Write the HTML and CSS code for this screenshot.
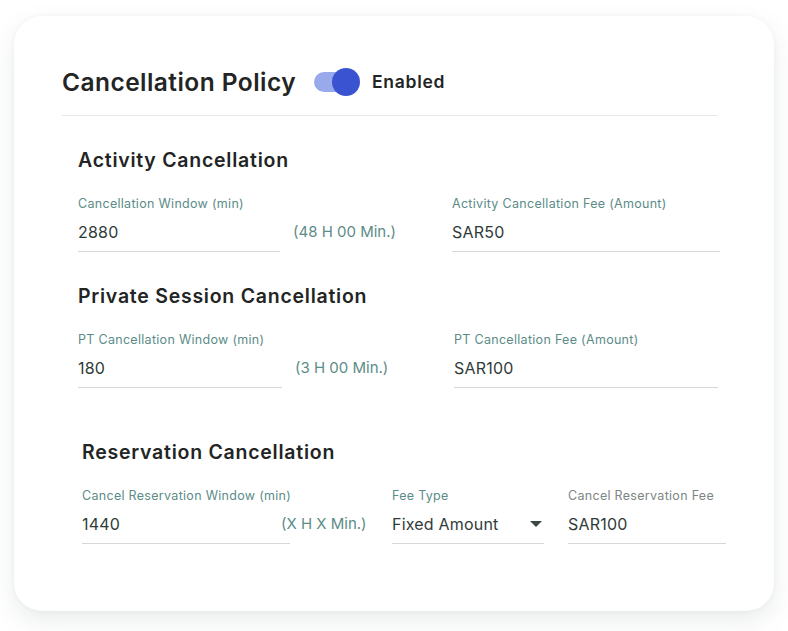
FILE: index.html
```html
<!DOCTYPE html>
<html lang="en">
<head>
<meta charset="utf-8">
<link rel="stylesheet" href="styles.css">
</head>
<body>
<div class="card">
  <div class="header">
    <h1 class="title">Cancellation Policy</h1>
    <div class="toggle"><div class="track"></div><div class="knob"></div></div>
    <span class="toggle-label">Enabled</span>
  </div>

  <section class="section s1">
    <h2 class="sec-title">Activity Cancellation</h2>
    <div class="row">
      <div class="field w1">
        <label class="lbl">Cancellation Window (min)</label>
        <div class="val">2880</div>
      </div>
      <div class="hint h1">(48 H 00 Min.)</div>
      <div class="field w2">
        <label class="lbl">Activity Cancellation Fee (Amount)</label>
        <div class="val">SAR50</div>
      </div>
    </div>
  </section>

  <section class="section s2">
    <h2 class="sec-title">Private Session Cancellation</h2>
    <div class="row">
      <div class="field w1b">
        <label class="lbl">PT Cancellation Window (min)</label>
        <div class="val">180</div>
      </div>
      <div class="hint h2">(3 H 00 Min.)</div>
      <div class="field w2b">
        <label class="lbl">PT Cancellation Fee (Amount)</label>
        <div class="val">SAR100</div>
      </div>
    </div>
  </section>

  <section class="section s3">
    <h2 class="sec-title">Reservation Cancellation</h2>
    <div class="row">
      <div class="field w3">
        <label class="lbl">Cancel Reservation Window (min)</label>
        <div class="val">1440</div>
      </div>
      <div class="hint h3">(X H X Min.)</div>
      <div class="field w4">
        <label class="lbl">Fee Type</label>
        <div class="val select">Fixed Amount<span class="caret"></span></div>
      </div>
      <div class="field w5">
        <label class="lbl grey">Cancel Reservation Fee</label>
        <div class="val">SAR100</div>
      </div>
    </div>
  </section>
</div>
</body>
</html>
```

FILE: styles.css
```css
* { box-sizing: border-box; }
html, body { margin: 0; padding: 0; background: #ffffff; }
body {
  width: 788px;
  height: 631px;
  padding: 16px 14px 0 14px;
  font-family: "Inter", "Liberation Sans", sans-serif;
  color: #222;
  overflow: hidden;
}
.card {
  width: 760px;
  height: 595px;
  background: #fff;
  border-radius: 28px;
  box-shadow: 0 10px 24px rgba(90, 110, 105, 0.13), 0 0 5px rgba(90,110,105,0.06);
  padding: 0 48px 0 48px;
}
.header {
  display: flex;
  align-items: center;
  height: 100px;
  padding-top: 32px;
  border-bottom: 1px solid #e6e9eb;
  margin-right: 8px;
}
.title {
  margin: 0;
  font-size: 24.5px;
  font-weight: 600;
  color: #222524;
  letter-spacing: 0.45px;
}
.toggle {
  position: relative;
  width: 46px;
  height: 28px;
  margin-left: 18px;
}
.track {
  position: absolute;
  left: 0; top: 4px;
  width: 40px; height: 20px;
  border-radius: 10px;
  background: #98aaec;
}
.knob {
  position: absolute;
  left: 18px; top: 0;
  width: 28px; height: 28px;
  border-radius: 50%;
  background: #3a54d1;
}
.toggle-label {
  margin-left: 12px;
  font-size: 17.5px;
  font-weight: 600;
  color: #222524;
  letter-spacing: 0.7px;
}
.section { padding-left: 16px; }
.s1 { padding-top: 32px; }
.s2 { padding-top: 32px; }
.s3 { padding-top: 52px; padding-left: 20px; }
.sec-title {
  margin: 0;
  font-size: 19.5px;
  font-weight: 600;
  color: #222524;
  line-height: 24px;
  letter-spacing: 0.75px;
}
.row {
  display: flex;
  align-items: flex-start;
  margin-top: 24px;
}
.field {
  display: flex;
  flex-direction: column;
  border-bottom: 1px solid #d4d8d9;
}
.lbl {
  font-size: 12.5px;
  line-height: 16px;
  color: #5b8c87;
  letter-spacing: 0.3px;
  white-space: nowrap;
}
.lbl.grey { color: #7d8584; }
.val {
  font-size: 16px;
  line-height: 20px;
  color: #2f3b39;
  padding: 10px 0 9px 0;
  display: flex;
  align-items: center;
  letter-spacing: 0.2px;
}
.hint {
  font-size: 15px;
  color: #5b8c87;
  padding-top: 26px;
  line-height: 20px;
  white-space: nowrap;
}
.w1 { width: 202px; }
.h1 { margin-left: 13px; width: 159px; }
.w2 { width: 268px; }
.w1b { width: 204px; }
.h2 { margin-left: 13px; width: 159px; }
.w2b { width: 264px; }
.w3 { width: 208px; }
.h3 { margin-left: -9px; width: 111px; }
.w4 { width: 152px; }
.select { justify-content: space-between; }
.caret {
  width: 0; height: 0;
  border-left: 6px solid transparent;
  border-right: 6px solid transparent;
  border-top: 6px solid #3a4745;
  margin-right: 2px;
}
.w5 { width: 158px; margin-left: 24px; }
```
